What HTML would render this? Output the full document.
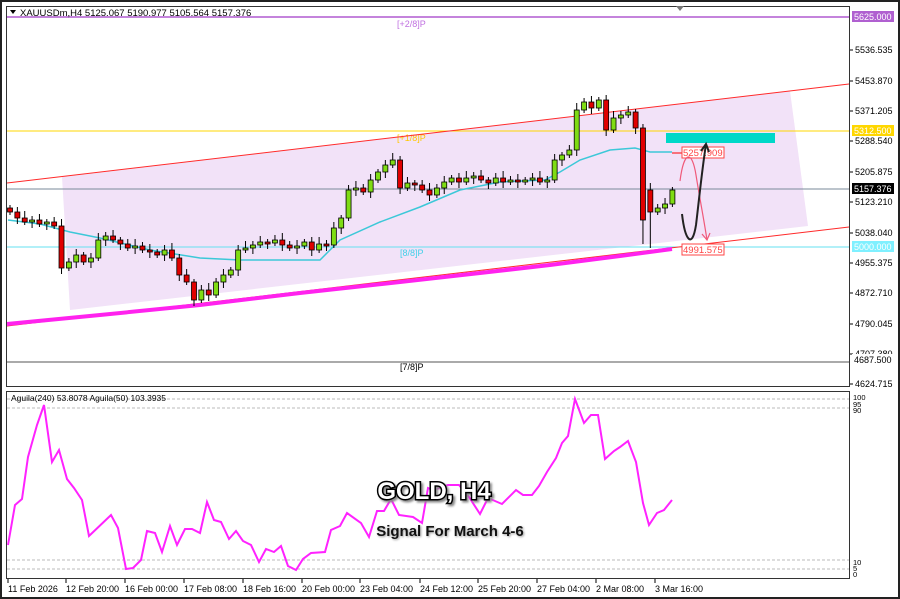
<!DOCTYPE html>
<html><head><meta charset="utf-8"><style>
html,body{margin:0;padding:0;background:#fff;width:900px;height:599px;overflow:hidden}
svg{display:block}
text{font-family:"Liberation Sans",sans-serif}
</style></head><body>
<svg id="s" width="900" height="599" viewBox="0 0 900 599" xmlns="http://www.w3.org/2000/svg">
<rect x="0" y="0" width="900" height="599" fill="#fff"/>
<polygon points="62,177 790,91 808,226 70,310" fill="#f2e2f8"/>
<line x1="7" y1="17" x2="849" y2="17" stroke="#b05ad0" stroke-width="1.5"/>
<line x1="7" y1="131" x2="849" y2="131" stroke="#ffd700" stroke-width="1"/>
<line x1="7" y1="189" x2="849" y2="189" stroke="#7a8a9a" stroke-width="1"/>
<line x1="7" y1="247" x2="849" y2="247" stroke="#66e0f0" stroke-width="1"/>
<line x1="7" y1="362" x2="849" y2="362" stroke="#555" stroke-width="1"/>
<text x="397" y="27" font-size="9" fill="#c070e0">[+2/8]P</text>
<text x="397" y="141" font-size="9" fill="#ffc800">[+1/8]P</text>
<text x="400" y="256" font-size="9" fill="#40d0e8">[8/8]P</text>
<text x="400" y="370" font-size="9" fill="#000">[7/8]P</text>
<line x1="7" y1="183" x2="849" y2="84" stroke="#ff2a2a" stroke-width="1"/>
<line x1="7" y1="326" x2="849" y2="227" stroke="#ff2a2a" stroke-width="1"/>
<polyline points="7,324 100,315 200,305 300,293 400,282 480,273 550,265 620,256 672,249" fill="none" stroke="#ff22ee" stroke-width="4"/>
<polyline points="8,220 40,224 70,232 100,238 150,250 200,258 240,260 320,260 340,240 380,222 420,207 460,190 500,182 545,180 560,172 580,160 610,150 635,148 650,152 672,152" fill="none" stroke="#3cc8d8" stroke-width="1.5"/>
<g id="candles"></g>
<rect x="666" y="133" width="109" height="10" fill="#00d8c8"/>
<line x1="672" y1="153" x2="682" y2="153" stroke="#f00"/>
<rect x="682" y="147" width="42" height="11" fill="#fff" stroke="#f44" stroke-width="1"/>
<text x="683" y="156" font-size="9.5" fill="#f44">5257.909</text>
<rect x="682" y="244" width="42" height="11" fill="#fff" stroke="#f44" stroke-width="1"/>
<text x="683" y="253" font-size="9.5" fill="#f44">4991.575</text>
<path d="M680,181 C684,150 692,150 696,175 C700,200 704,220 707,240" fill="none" stroke="#f05a7a" stroke-width="1.2"/>
<path d="M702,234 L707,240 L710,233" fill="none" stroke="#f05a7a" stroke-width="1.2"/>
<path d="M682,214 C685,240 692,250 696,225 C699,200 702,170 706,144" fill="none" stroke="#222" stroke-width="2"/>
<path d="M701,151 L706,144 L709,152" fill="none" stroke="#222" stroke-width="2"/>
<line x1="7" y1="399" x2="849" y2="399" stroke="#bbb" stroke-dasharray="3,2"/>
<line x1="7" y1="408" x2="849" y2="408" stroke="#bbb" stroke-dasharray="3,2"/>
<line x1="7" y1="560" x2="849" y2="560" stroke="#bbb" stroke-dasharray="3,2"/>
<line x1="7" y1="569" x2="849" y2="569" stroke="#bbb" stroke-dasharray="3,2"/>
<polyline fill="none" stroke="#ff22ff" stroke-width="2" points="8,545 15,505 22,499 28,457 37,425 44,405 52,462 59,450 67,479 74,488 82,500 89,536 111,515 118,528 126,569 133,568 141,560 147,531 155,533 162,552 170,526 177,545 185,529 192,529 200,533 207,502 214,520 221,522 229,539 236,531 243,541 251,545 259,562 266,549 274,552 281,546 288,566 296,570 303,559 311,553 325,552 331,530 340,526 347,513 361,523 369,537 377,511 384,511 391,499 399,515 413,517 422,523 428,488 433,490 448,485 459,485 469,497 480,514 488,498 502,504 516,490 523,495 532,495 539,486 547,472 556,458 562,443 568,436 575,399 584,423 591,415 598,415 605,459 614,451 620,447 628,441 636,462 643,503 649,525 657,513 664,510 672,500"/>
<text x="11" y="401" font-size="8.5" fill="#000">Aguila(240) 53.8078  Aguila(50) 103.3935</text>
<g font-weight="bold">
<text x="434" y="499" font-size="24" text-anchor="middle" fill="#fff" stroke="#000" stroke-width="3" paint-order="stroke" style="filter:drop-shadow(2px 2px 1px #888)">GOLD, H4</text>
<text x="450" y="536" font-size="15" text-anchor="middle" fill="#111" style="filter:drop-shadow(1px 1px 1px #999)">Signal For March 4-6</text>
</g>
<rect x="1" y="1" width="898" height="597" fill="none" stroke="#222" stroke-width="2"/>
<rect x="6.5" y="6.5" width="843" height="380" fill="none" stroke="#333" stroke-width="1"/>
<rect x="6.5" y="391.5" width="843" height="187" fill="none" stroke="#333" stroke-width="1"/>
<path d="M676,6 L684,6 L680,11 Z" fill="#777"/>
<path d="M10,10 L16,10 L13,14 Z" fill="#000"/>
<text x="20" y="16" font-size="9.5" fill="#000">XAUUSDm,H4  5125.067 5190.977 5105.564 5157.376</text>
<g id="axis" font-size="9" fill="#000"></g>
<g id="times" font-size="9" fill="#000"></g>
</svg>
<script>
(function(){
var NS="http://www.w3.org/2000/svg";
function el(t,a,p,txt){var e=document.createElementNS(NS,t);for(var k in a)e.setAttribute(k,a[k]);if(txt)e.textContent=txt;p.appendChild(e);return e;}
var c=[212,218,222,220,224,222,226,268,262,255,262,258,240,236,240,244,248,246,250,252,255,250,258,275,282,300,290,295,282,275,270,250,248,245,242,243,240,245,248,246,242,250,244,245,228,218,190,188,192,180,172,165,160,188,183,185,190,195,188,182,178,182,178,176,180,183,178,182,180,182,180,178,182,180,160,155,150,110,102,108,100,130,118,115,112,128,220,212,208,204,190];
var g=document.getElementById("candles");var op=208;
for(var i=0;i<c.length;i++){var x=10+i*7.36,cl=c[i],o=op;if(i==87)o=190;
var tp=Math.min(o,cl),bt=Math.max(o,cl);var hi=tp-3-(i*7%5),lo=bt+3+(i*3%6);
if(i==86){hi=tp-4;lo=bt+24}if(i==87){lo=248}
el("line",{x1:x,y1:hi,x2:x,y2:lo,stroke:"#000","stroke-width":1},g);
var h=Math.max(bt-tp,2);el("rect",{x:x-2.5,y:tp,width:5,height:h,fill:cl<o?"#7fdc14":"#e00000",stroke:"#000","stroke-width":0.8},g);
op=cl;}
var ax=document.getElementById("axis");
var lv=[[50,"5536.535"],[81,"5453.870"],[111,"5371.205"],[141,"5288.540"],[172,"5205.875"],[202,"5123.210"],[233,"5038.040"],[263,"4955.375"],[293,"4872.710"],[324,"4790.045"],[354,"4707.380"],[384,"4624.715"]];
lv.forEach(function(l){el("line",{x1:850,y1:l[0],x2:853,y2:l[0],stroke:"#000"},ax);el("text",{x:855,y:l[0]+3},ax,l[1]);});
function box(y,bg,fg,t){el("rect",{x:852,y:y-6,width:42,height:11,fill:bg},ax);el("text",{x:854,y:y+3,fill:fg},ax,t);}
box(17,"#b060d0","#fff","5625.000");box(131,"#ffd700","#fff","5312.500");box(189,"#000","#fff","5157.376");box(247,"#7ff0ff","#fff","5000.000");box(360,"#fff","#000","4687.500");
[[398,"100"],[405,"95"],[411,"90"],[563,"10"],[569,"5"],[575,"0"]].forEach(function(l){el("text",{x:853,y:l[0]+2,"font-size":7.5},ax,l[1]);});
var tg=document.getElementById("times");
[[8,"11 Feb 2026"],[66,"12 Feb 20:00"],[125,"16 Feb 00:00"],[184,"17 Feb 08:00"],[243,"18 Feb 16:00"],[302,"20 Feb 00:00"],[360,"23 Feb 04:00"],[420,"24 Feb 12:00"],[478,"25 Feb 20:00"],[537,"27 Feb 04:00"],[596,"2 Mar 08:00"],[655,"3 Mar 16:00"]].forEach(function(t){el("line",{x1:t[0],y1:579,x2:t[0],y2:583,stroke:"#000"},tg);el("text",{x:t[0],y:592},tg,t[1]);});
})();
</script>
</body></html>
